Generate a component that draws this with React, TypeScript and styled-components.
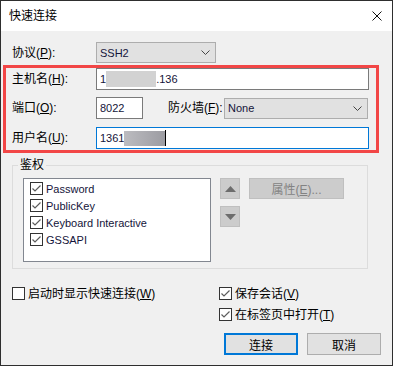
import styled, { createGlobalStyle } from "styled-components";

const GlobalStyle = createGlobalStyle`
  html, body {
    margin: 0;
    padding: 0;
    background: #ffffff;
  }
  body {
    font-family: "Liberation Sans", "Noto Sans CJK SC", sans-serif;
    font-size: 12px;
    color: #000;
  }
  * {
    box-sizing: border-box;
  }
`;

const Window = styled.div`
  width: 393px;
  height: 366px;
  border: 1px solid #2e2e2e;
  background: #f0f0f0;
  display: flex;
  flex-direction: column;
`;

const TitleBar = styled.div`
  height: 30px;
  flex-shrink: 0;
  background: #fff;
  display: flex;
  align-items: center;
  justify-content: space-between;
  padding: 0 10px 0 8px;
`;

const Title = styled.span`
  font-size: 12px;
  line-height: 1;
`;

const Body = styled.div`
  flex: 1;
  display: flex;
  flex-direction: column;
  padding-top: 11px;
`;

const FieldRow = styled.div<{ $indent: number; $top?: number }>`
  display: flex;
  align-items: center;
  padding-left: ${(p) => p.$indent}px;
  margin-top: ${(p) => p.$top ?? 0}px;
`;

const Label = styled.span<{ $width: number; $gap?: number }>`
  width: ${(p) => p.$width}px;
  margin-left: ${(p) => p.$gap ?? 0}px;
  flex-shrink: 0;
  white-space: nowrap;
  line-height: 16px;
`;

const Key = styled.span`
  text-decoration: underline;
  text-underline-offset: 1px;
`;

const Select = styled.div<{ $width: number }>`
  width: ${(p) => p.$width}px;
  height: 21px;
  background: #e1e1e1;
  border: 1px solid #adadad;
  display: flex;
  align-items: center;
  justify-content: space-between;
  padding: 0 5px 0 3px;
  font-size: 11px;
  color: #14143a;
`;

const Input = styled.div<{ $width: number; $focused?: boolean }>`
  width: ${(p) => p.$width}px;
  height: 22px;
  background: #fff;
  border: 1px solid ${(p) => (p.$focused ? "#0078d7" : "#7a7a7a")};
  display: flex;
  align-items: center;
  padding-left: 3px;
  font-size: 11px;
  color: #14143a;
  white-space: nowrap;
`;

const Redacted = styled.span<{ $width: number; $dark?: boolean }>`
  display: inline-block;
  width: ${(p) => p.$width}px;
  height: ${(p) => (p.$dark ? 15 : 16)}px;
  background: ${(p) =>
    p.$dark ? "linear-gradient(to right, #bcbcc0, #9c9ca2)" : "#d2d2d2"};
`;

const Caret = styled.span`
  display: inline-block;
  width: 1px;
  height: 16px;
  background: #000;
`;

const Highlight = styled.div`
  margin: 2px 0 0 2px;
  width: 376px;
  border: 3px solid #f24646;
  padding-bottom: 1px;
  display: flex;
  flex-direction: column;
`;

const GroupBox = styled.fieldset`
  margin: 4px 0 0 11px;
  width: 356px;
  border: 1px solid #dcdcdc;
  padding: 5px 0 6px 10px;
  min-inline-size: 0;
`;

const Legend = styled.legend`
  margin-left: -5px;
  padding: 0 2px;
  font-size: 12px;
  line-height: 16px;
`;

const GroupContent = styled.div`
  display: flex;
  align-items: flex-start;
`;

const ListBox = styled.div`
  width: 188px;
  height: 84px;
  background: #fff;
  border: 1px solid #828790;
  padding: 1px 0 0 6px;
  display: flex;
  flex-direction: column;
`;

const ListItem = styled.div`
  height: 17px;
  display: flex;
  align-items: center;
  gap: 3px;
  font-size: 11px;
  color: #14143a;
  white-space: nowrap;
`;

const Box = styled.span`
  width: 13px;
  height: 13px;
  flex-shrink: 0;
  border: 1px solid #333;
  background: #fff;
  display: flex;
  align-items: center;
  justify-content: center;
`;

const ArrowColumn = styled.div`
  margin-left: 9px;
  display: flex;
  flex-direction: column;
  gap: 7px;
`;

const ArrowButton = styled.div`
  width: 20px;
  height: 21px;
  background: #cccccc;
  border: 1px solid #bfbfbf;
  display: flex;
  align-items: center;
  justify-content: center;
`;

const PropsButton = styled.div`
  margin-left: 9px;
  width: 95px;
  height: 21px;
  background: #cccccc;
  border: 1px solid #bfbfbf;
  color: #838383;
  display: flex;
  align-items: center;
  justify-content: center;
`;

const Options = styled.div`
  margin-top: 16px;
  display: flex;
`;

const OptionColumn = styled.div<{ $width?: number; $indent?: number }>`
  width: ${(p) => (p.$width ? `${p.$width}px` : "auto")};
  padding-left: ${(p) => p.$indent ?? 0}px;
  display: flex;
  flex-direction: column;
  gap: 4px;
`;

const Option = styled.div`
  height: 17px;
  display: flex;
  align-items: center;
  gap: 3px;
  white-space: nowrap;
`;

const OptionText = styled.span`
  line-height: 16px;
`;

const ButtonRow = styled.div`
  margin-top: 10px;
  display: flex;
  justify-content: flex-end;
  gap: 9px;
  padding-right: 11px;
`;

const Button = styled.div<{ $default?: boolean }>`
  width: 74px;
  height: 22px;
  background: #e1e1e1;
  border: ${(p) => (p.$default ? "2px solid #0078d7" : "1px solid #adadad")};
  display: flex;
  align-items: center;
  justify-content: center;
`;

function Chevron() {
  return (
    <svg width="9" height="5" viewBox="0 0 9 5">
      <polyline points="0.5,0.5 4.5,4.5 8.5,0.5" fill="none" stroke="#444" strokeWidth="1" />
    </svg>
  );
}

function CloseIcon() {
  return (
    <svg width="10" height="10" viewBox="0 0 10 10">
      <path d="M0.5 0.5 L9.5 9.5 M9.5 0.5 L0.5 9.5" stroke="#111" strokeWidth="1" />
    </svg>
  );
}

function Triangle({ down }: { down?: boolean }) {
  return (
    <svg width="11" height="6" viewBox="0 0 11 6">
      <polygon points={down ? "0,0 11,0 5.5,6" : "0,6 11,6 5.5,0"} fill="#6d6d6d" />
    </svg>
  );
}

function Check({ checked }: { checked: boolean }) {
  return (
    <Box>
      {checked && (
        <svg width="11" height="11" viewBox="0 0 11 11">
          <polyline points="1.5,5.5 4,8 9.5,2.5" fill="none" stroke="#5c5c5c" strokeWidth="1.2" />
        </svg>
      )}
    </Box>
  );
}

const authMethods = ["Password", "PublicKey", "Keyboard Interactive", "GSSAPI"];

export default function App() {
  return (
    <>
      <GlobalStyle />
      <Window>
        <TitleBar>
          <Title>快速连接</Title>
          <CloseIcon />
        </TitleBar>
        <Body>
          <FieldRow $indent={11}>
            <Label $width={84}>
              协议(<Key>P</Key>):
            </Label>
            <Select $width={120}>
              SSH2
              <Chevron />
            </Select>
          </FieldRow>

          <Highlight>
            <FieldRow $indent={6}>
              <Label $width={84}>
                主机名(<Key>H</Key>):
              </Label>
              <Input $width={273}>
                1<Redacted $width={50} />.136
              </Input>
            </FieldRow>
            <FieldRow $indent={6} $top={7}>
              <Label $width={84}>
                端口(<Key>O</Key>):
              </Label>
              <Input $width={47}>8022</Input>
              <Label $width={56} $gap={25}>
                防火墙(<Key>F</Key>):
              </Label>
              <Select $width={144}>
                None
                <Chevron />
              </Select>
            </FieldRow>
            <FieldRow $indent={6} $top={8}>
              <Label $width={84}>
                用户名(<Key>U</Key>):
              </Label>
              <Input $width={273} $focused>
                1361<Redacted $width={41} $dark />
                <Caret />
              </Input>
            </FieldRow>
          </Highlight>

          <GroupBox>
            <Legend>鉴权</Legend>
            <GroupContent>
              <ListBox>
                {authMethods.map((m) => (
                  <ListItem key={m}>
                    <Check checked />
                    {m}
                  </ListItem>
                ))}
              </ListBox>
              <ArrowColumn>
                <ArrowButton>
                  <Triangle />
                </ArrowButton>
                <ArrowButton>
                  <Triangle down />
                </ArrowButton>
              </ArrowColumn>
              <PropsButton>
                <span>
                  属性(<Key>E</Key>)...
                </span>
              </PropsButton>
            </GroupContent>
          </GroupBox>

          <Options>
            <OptionColumn $width={218} $indent={11}>
              <Option>
                <Check checked={false} />
                <OptionText>
                  启动时显示快速连接(<Key>W</Key>)
                </OptionText>
              </Option>
            </OptionColumn>
            <OptionColumn>
              <Option>
                <Check checked />
                <OptionText>
                  保存会话(<Key>V</Key>)
                </OptionText>
              </Option>
              <Option>
                <Check checked />
                <OptionText>
                  在标签页中打开(<Key>T</Key>)
                </OptionText>
              </Option>
            </OptionColumn>
          </Options>

          <ButtonRow>
            <Button $default>连接</Button>
            <Button>取消</Button>
          </ButtonRow>
        </Body>
      </Window>
    </>
  );
}
